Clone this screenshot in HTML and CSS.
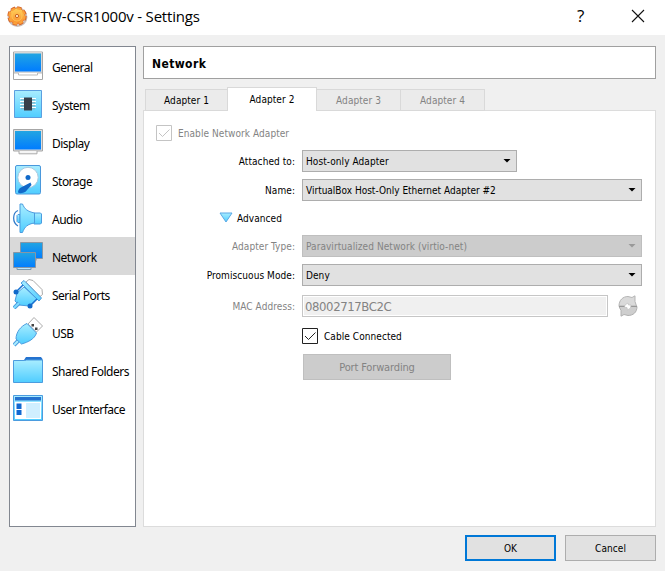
FILE: index.html
```html
<!DOCTYPE html>
<html lang="en">
<head>
<meta charset="utf-8">
<title>ETW-CSR1000v - Settings</title>
<link rel="stylesheet" href="styles.css">
</head>
<body>
<svg class="defs" width="0" height="0">
  <defs>
    <linearGradient id="screen" x1="0" y1="0" x2="0" y2="1"><stop offset="0" stop-color="#22a5e2"/><stop offset="1" stop-color="#007cff"/></linearGradient>
    <linearGradient id="light" x1="0" y1="0" x2="0" y2="1"><stop offset="0" stop-color="#a9edff"/><stop offset="1" stop-color="#4fcdff"/></linearGradient>
    <linearGradient id="orange" x1="0" y1="0" x2="0" y2="1"><stop offset="0" stop-color="#ffd45c"/><stop offset="1" stop-color="#f98a2c"/></linearGradient>
  </defs>
</svg>
<header class="titlebar">
  <svg class="gear" width="22" height="22" viewBox="0 0 22 22"><circle cx="11.5" cy="12" r="8.7" fill="none" stroke="#c9c0bc" stroke-width="2.5"/><circle cx="11" cy="11" r="8" fill="none" stroke="#d9672a" stroke-width="3.4" stroke-dasharray="4.2 2.083"/><circle cx="11" cy="11" r="8" fill="url(#orange)" stroke="#e0702c" stroke-width=".8"/><circle cx="11" cy="11" r="7.600" fill="none" stroke="#fba23a" stroke-width="2.200" stroke-dasharray="3.600 2.369"/><circle cx="11" cy="11" r="5" fill="none" stroke="#ffc454"/><circle cx="11" cy="11" r="1.6" fill="#fff0c8" stroke="#c95f22"/></svg>
  <h1>ETW-CSR1000v - Settings</h1>
  <span class="help">?</span>
  <svg class="close" width="14" height="14" viewBox="0 0 14 14"><path d="M1 1 13 13M13 1 1 13" stroke="#111" stroke-width="1.1"/></svg>
</header>
<main class="content">
  <nav class="sidebar">
    <div class="item"><svg class="icon" viewBox="0 0 30 30"><path d="M.5 1h29v27.5H.5z" fill="#fff" stroke="#a6a6a6"/><path d="M1 1h28v21H1z" fill="#d7d7d7"/><path d="M2 2.500h26V20.5H2z" fill="url(#screen)"/><path d="M1 22h4.500v2h19v-2H29" fill="none" stroke="#bbb"/></svg><span>General</span></div>
    <div class="item"><svg class="icon" viewBox="0 0 30 30"><path d="M1.5 1.5h27v27h-27z" fill="url(#light)" stroke="#5b9fe0"/><path d="M7 9.5h16M7 12.5h16M7 15.5h16M7 18.5h16" stroke="#fff" stroke-width="1.2"/><path d="M8 10.8h14M8 13.8h14M8 16.8h14M8 19.8h14" stroke="#8aaab5"/><path d="M11 8.5h8v13h-8z" fill="#383e4a"/></svg><span>System</span></div>
    <div class="item"><svg class="icon" viewBox="0 0 30 30"><path d="M.5 2.500h29v21.5H.5z" fill="#ddd" stroke="#a6a6a6"/><path d="M2 4h26v18.500H2z" fill="url(#screen)"/><path d="M6 24v2.8h18V24" fill="#f5f5f5" stroke="#aaa"/></svg><span>Display</span></div>
    <div class="item"><svg class="icon" viewBox="0 0 30 30"><rect x="2.5" y=".5" width="25" height="28.500" rx="1.5" fill="url(#light)" stroke="#4a98dc"/><circle cx="15" cy="12.500" r="10.2" fill="#fff" stroke="#a8c9df"/><circle cx="15" cy="12.500" r="2.5" fill="#1169c9"/><path d="m17.5 17.5 1 2.5-6 6.8c-2 1.5-6 2-7.5.8 0-2 1-4 2.5-4.8z" fill="#1169c9"/></svg><span>Storage</span></div>
    <div class="item"><svg class="icon" viewBox="0 0 30 30"><path d="M21 10h6.500l1 1v9l-1 1H21z" fill="url(#light)" stroke="#4b9cdf"/><path d="M5 11.500h2v8H5l-1-1v-6z" fill="url(#light)" stroke="#4b9cdf"/><path d="M7 1h2.500c2 5 5 7.500 12 9v10c-7 1-10 4-12 9.500H7z" fill="url(#light)" stroke="#4b9cdf"/><path d="M5 7.500C-.8 10-.8 20 5 23" fill="none" stroke="#367ecb" stroke-width="1.300"/></svg><span>Audio</span></div>
    <div class="item selected"><svg class="icon" viewBox="0 0 30 30"><path d="M12 16.500h11v3H12z" fill="#d7f0ff" stroke="#789"/><path d="M7.500 1.500h22v16h-22z" fill="url(#screen)" stroke="#8796a5"/><path d="M4 26h14v2.500H4z" fill="#b9e5ff" stroke="#7897ad"/><path d="M.5 11.500h22v15H.5z" fill="url(#screen)" stroke="#8796a5"/></svg><span>Network</span></div>
    <div class="item"><svg class="icon" viewBox="0 0 30 30"><path d="m13 3 3-2.500 4 1 9 9 .5 5-2.500 2z" fill="#fff" stroke="#aaa"/><path d="M11 8 4 14l-2 8 4 4 10 1 8-7z" fill="url(#light)" stroke="#4b9cdf"/><path d="m8 4 3-2.500L28.500 19 26 22z" fill="url(#light)" stroke="#4b9cdf"/><path d="M6 24 1 29" stroke="#4b9cdf" stroke-width="4"/><path d="m6 24-5 5" stroke="#80dcff" stroke-width="2"/><path d="m10 6-7 7M24 20l-7 7" stroke="#1773d1" stroke-width="1.500"/><circle cx="3" cy="13" r="2.500" fill="#1169c9"/><circle cx="17" cy="27" r="2.500" fill="#1169c9"/></svg><span>Serial Ports</span></div>
    <div class="item"><svg class="icon" viewBox="0 0 30 30"><path d="m15 7 6-6.500 8.500 8.500-6 6z" fill="#fff" stroke="#aaa"/><path d="M18.500 7h2.500v2.500h-2.500zM22 10.500h2.500V13H22z" fill="#444"/><path d="m5 24-4 4" stroke="#4b9cdf" stroke-width="4"/><path d="m5 24-4 4" stroke="#a9edff" stroke-width="2"/><path d="m14 6.500 9.500 9.500c-2 6-8 9-15 11L3 22c0-7 5-13 11-15.500z" fill="url(#light)" stroke="#4b9cdf"/></svg><span>USB</span></div>
    <div class="item"><svg class="icon" viewBox="0 0 30 30"><path d="m11 5 2-3h15l1.500 2v4H11z" fill="#2472cf"/><path d="M.5 5.500h11l2-.5h16v22.500H.5z" fill="url(#light)" stroke="#4b9cdf"/></svg><span>Shared Folders</span></div>
    <div class="item"><svg class="icon" viewBox="0 0 30 30"><path d="M.5 2.500h29v25H.5z" fill="url(#light)" stroke="#4b9cdf"/><path d="M2 4h26v3.500H2z" fill="#2472cf"/><path d="M2 9h26v17H2z" fill="#fff"/><path d="M3.500 10.500h5V16h-5zM3.500 17h5v5h-5z" fill="#1169d1"/><path d="M13 10h14v15H13z" fill="#d0efff"/></svg><span>User Interface</span></div>
  </nav>
  <section class="page">
    <h2 class="heading"><span>Network</span></h2>
    <div class="tabs">
      <div class="tab first"><span>Adapter 1</span></div>
      <div class="tab active"><span>Adapter 2</span></div>
      <div class="tab off"><span>Adapter 3</span></div>
      <div class="tab off"><span>Adapter 4</span></div>
    </div>
    <form class="panel">
      <div class="enable off"><svg class="check" viewBox="0 0 16 16"><path d="M.5.5h15v15H.5z"/><path d="m3 8 3.500 3.500 7-7"/></svg><span>Enable Network Adapter</span></div>
      <div class="row"><label>Attached to:</label><div class="combo short"><span>Host-only Adapter</span><i class="arrow"></i></div></div>
      <div class="row"><label>Name:</label><div class="combo"><span class="tight">VirtualBox Host-Only Ethernet Adapter #2</span><i class="arrow"></i></div></div>
      <div class="advanced"><svg width="14" height="11" viewBox="0 0 14 11"><path d="M1 1h12L7 10z" fill="url(#light)" stroke="#5aa8e5"/></svg><span>Advanced</span></div>
      <div class="row off"><label>Adapter Type:</label><div class="combo disabled"><span>Paravirtualized Network (virtio-net)</span><i class="arrow"></i></div></div>
      <div class="row"><label>Promiscuous Mode:</label><div class="combo"><span>Deny</span><i class="arrow"></i></div></div>
      <div class="row off mac"><label>MAC Address:</label><div class="field"><span>08002717BC2C</span></div><svg class="refresh" width="20" height="22" viewBox="0 0 20 22"><path d="M1 11C1 5 5 1.500 10 1.500l4 1L17 .8v5.700l1.500 4.500z" fill="#dadada" stroke="#b5b5b5"/><path d="M19 11.500c0 6-4 9-9 9l-4-1L3 21.200v-5.700l-2-4z" fill="#cecece" stroke="#b0b0b0"/><path d="M1 11.500h6M13 11.500h6" stroke="#999"/><path d="m7 10 3-2 .500 2H13l-.500 3L9.500 15 9 12.500H6.500z" fill="#fff" stroke="#bbb" stroke-width=".6"/></svg></div>
      <div class="cable"><svg class="check" viewBox="0 0 16 16"><path d="M.5.5h15v15H.5z"/><path d="m3 8 3.500 3.500 7-7"/></svg><span>Cable Connected</span></div>
      <div class="button forward off"><span>Port Forwarding</span></div>
    </form>
  </section>
</main>
<footer class="actions"><div class="button primary">OK</div><div class="button">Cancel</div></footer>
</body>
</html>
```
FILE: styles.css
```css
* { box-sizing: border-box; }
body {
  margin: 0;
  width: 665px;
  height: 571px;
  overflow: hidden;
  background: #f0f0f0;
  color: #000;
  font: 10px/14px "DejaVu Sans Condensed", "DejaVu Sans", sans-serif;
  font-stretch: condensed;
  letter-spacing: 0.07px;
}
span, label { white-space: nowrap; }
.defs { position: absolute; }
.titlebar { height: 35px; display: flex; align-items: center; background: #fff; padding: 0 20px 3px 6px; }
.titlebar h1 { margin: 0 0 0 4px; width: 545px; font: 15px/20px "Open Sans", sans-serif; letter-spacing: -0.2px; }
.help { width: 54px; font: 17px/20px "Open Sans", sans-serif; }
.content { display: flex; gap: 7px; padding: 11px 9px 0; }
.sidebar { width: 127px; height: 481px; background: #fff; border: 1px solid #828790; }
.item { height: 38px; display: flex; align-items: center; gap: 9px; padding-left: 3px; font: 12px/16px "Noto Sans", sans-serif; letter-spacing: -0.52px; }
.item.selected { background: #d9d9d9; }
.icon { width: 30px; height: 30px; flex: none; }
.item span { padding-top: 3px; }
.page { width: 513px; }
.heading { margin: 0; height: 33px; display: flex; align-items: center; padding: 3px 0 0 8px; background: #fff; border: 1px solid #a0a0a0; font: bold 12px/16px "DejaVu Sans Condensed", sans-serif; letter-spacing: 0.4px; }
.tabs { display: flex; align-items: flex-end; height: 32px; padding-left: 2px; margin-bottom: -1px; position: relative; }
.tab { width: 84px; height: 22px; display: flex; align-items: center; justify-content: center; border: 1px solid #d9d9d9; border-left: 0; background: #ebebeb; padding-top: 2px; }
.tab.first { width: 82px; border-left: 1px solid #d9d9d9; border-right: 0; }
.tab.active { width: 90px; height: 24px; background: #fff; border-left: 1px solid #d9d9d9; border-bottom: 0; padding-top: 1px; }
.off { color: #838383; }
.panel { height: 417px; border: 1px solid #dcdcdc; background: #fff; padding-top: 14px; }
.enable { display: flex; align-items: center; height: 16px; gap: 6px; margin: 0 0 9px 12px; }
.check { width: 16px; height: 16px; flex: none; fill: none; stroke: #222; }
.enable .check { stroke: #c4c4c4; }
.enable span, .cable span, .row label, .combo span, .advanced span { padding-top: 2px; }
.row { display: grid; grid-template-columns: 151px 340px; column-gap: 7px; align-items: center; height: 22px; margin-bottom: 7px; }
.row label { text-align: right; }
.combo { height: 22px; display: flex; align-items: center; justify-content: space-between; background: #e1e1e1; border: 1px solid #adadad; padding: 0 5px 0 3px; }
.tight { letter-spacing: 0; }
.short { width: 215px; }
.disabled { background: #ccc; border-color: #bfbfbf; }
.arrow { width: 8px; height: 4px; background: #000; clip-path: polygon(0 0, 100% 0, 50% 100%); margin-bottom: 1px; }
.disabled .arrow { background: #999; }
.advanced { height: 20px; display: flex; align-items: center; gap: 4px; margin: 0 0 7px 75px; }
.advanced svg { margin-bottom: 2px; }
.row.mac { grid-template-columns: 151px 306px 20px; margin-top: 9px; }
.mac .refresh { margin-left: 3px; }
.field { height: 22px; background: #f0f0f0; border: 1px solid #c6c6c6; box-shadow: inset 0 0 0 1px #fff; padding-left: 2px; font-size: 13px; line-height: 22px; letter-spacing: -0.4px; }
.cable { display: flex; align-items: center; height: 16px; gap: 6px; margin: 11px 0 0 158px; }
.button { width: 91px; height: 26px; display: flex; align-items: center; justify-content: center; background: #e1e1e1; border: 1px solid #adadad; padding-top: 1px; }
.primary { border: 2px solid #0078d7; padding-top: 1px; }
.forward { width: 148px; margin: 10px 0 0 159px; background: #ccc; border-color: #bfbfbf; font-size: 11px; letter-spacing: -0.15px; padding-top: 2px; }
.actions { display: flex; justify-content: flex-end; gap: 9px; padding: 8px 9px 0; }
```
